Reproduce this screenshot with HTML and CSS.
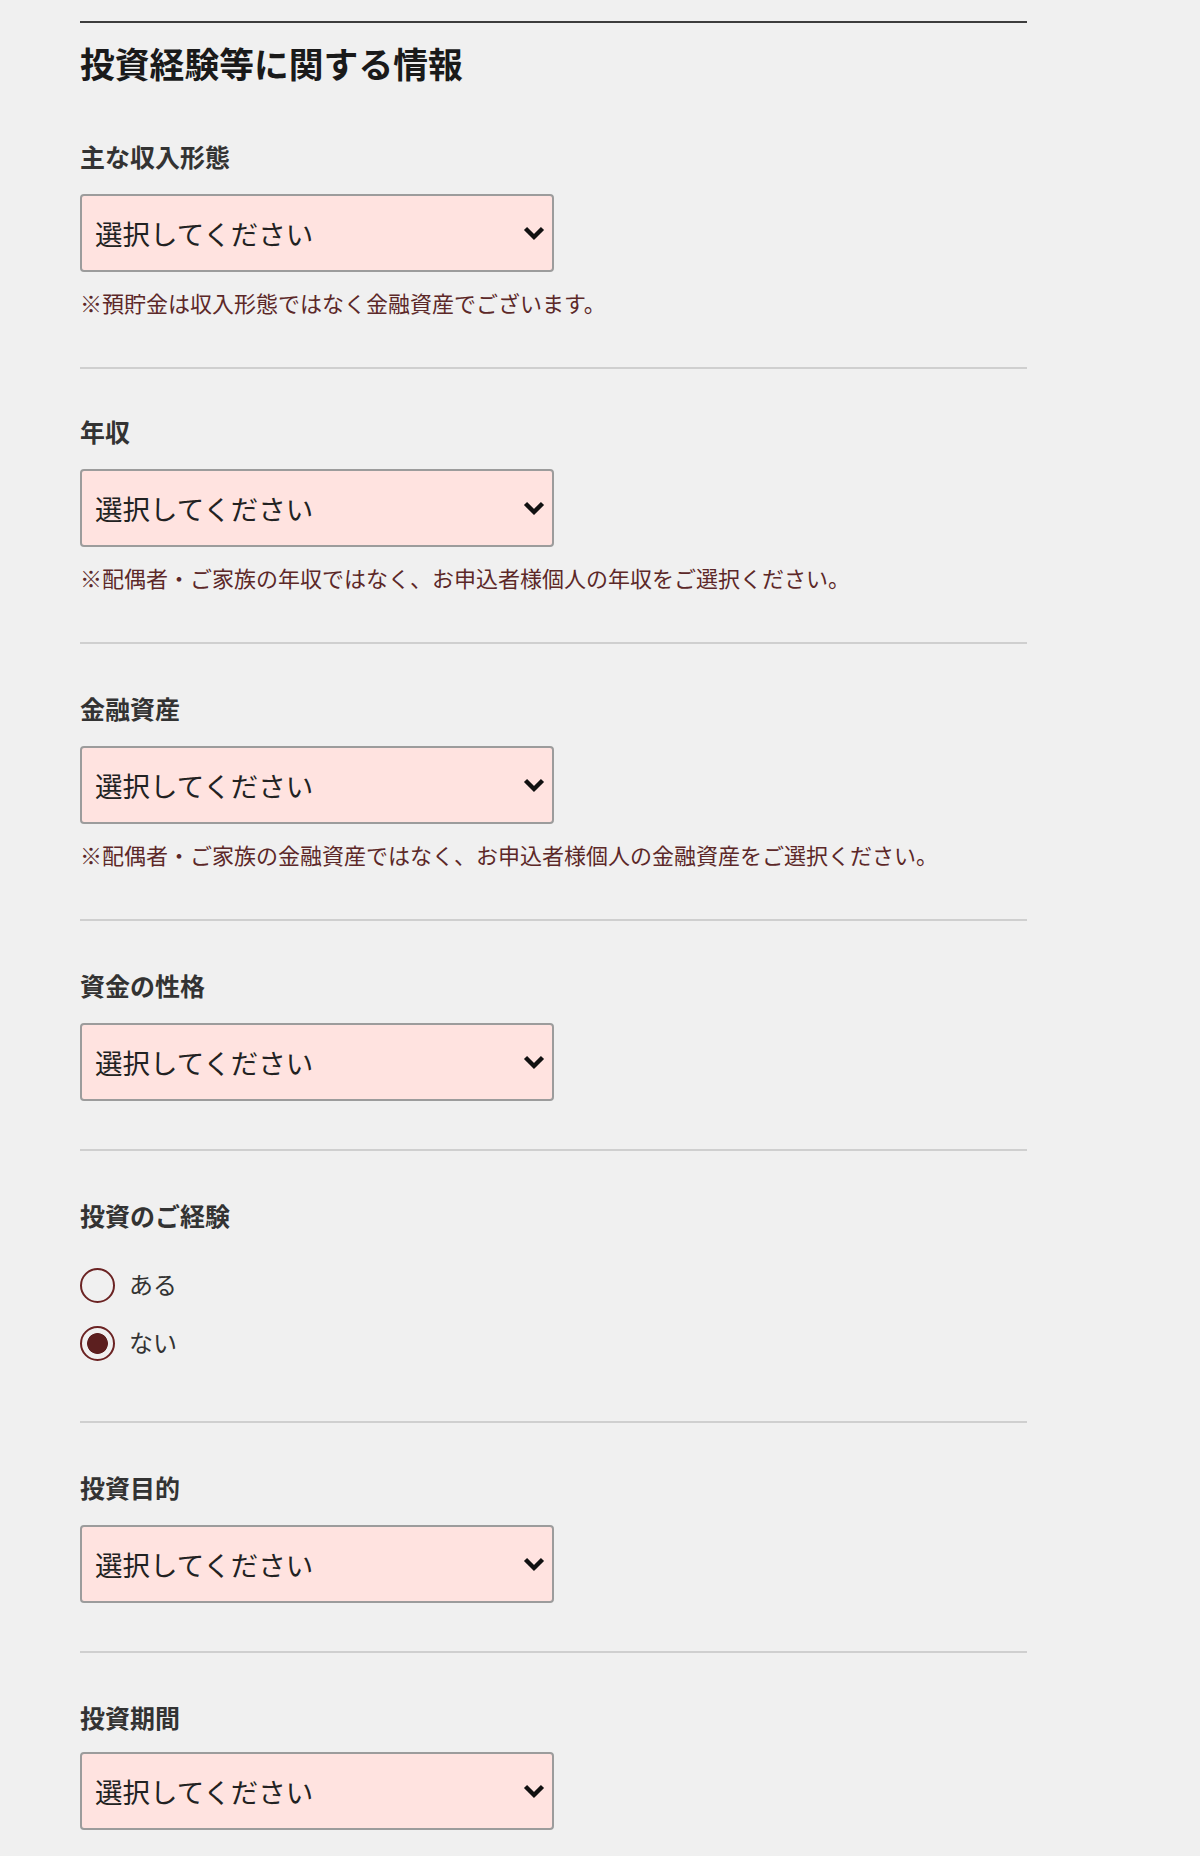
FILE: index.html
```html
<!DOCTYPE html>
<html lang="ja">
<head>
<meta charset="utf-8">
<title>投資経験等に関する情報</title>
<link rel="stylesheet" href="styles.css">
</head>
<body>
<section class="form">
  <h2 class="form__title">投資経験等に関する情報</h2>

  <div class="field">
    <div class="field__label">主な収入形態</div>
    <div class="select">
      <select class="select__control"><option>選択してください</option></select>
      <svg class="select__icon" viewBox="0 0 22 15" aria-hidden="true"><path d="M2.5 2.5 L11 11 L19.5 2.5" fill="none" stroke="#111" stroke-width="4.4" stroke-linejoin="miter" stroke-linecap="butt"/></svg>
    </div>
    <p class="field__note">※預貯金は収入形態ではなく金融資産でございます。</p>
  </div>

  <div class="field field--top-tight">
    <div class="field__label">年収</div>
    <div class="select">
      <select class="select__control"><option>選択してください</option></select>
      <svg class="select__icon" viewBox="0 0 22 15" aria-hidden="true"><path d="M2.5 2.5 L11 11 L19.5 2.5" fill="none" stroke="#111" stroke-width="4.4" stroke-linejoin="miter" stroke-linecap="butt"/></svg>
    </div>
    <p class="field__note">※配偶者・ご家族の年収ではなく、お申込者様個人の年収をご選択ください。</p>
  </div>

  <div class="field">
    <div class="field__label">金融資産</div>
    <div class="select">
      <select class="select__control"><option>選択してください</option></select>
      <svg class="select__icon" viewBox="0 0 22 15" aria-hidden="true"><path d="M2.5 2.5 L11 11 L19.5 2.5" fill="none" stroke="#111" stroke-width="4.4" stroke-linejoin="miter" stroke-linecap="butt"/></svg>
    </div>
    <p class="field__note">※配偶者・ご家族の金融資産ではなく、お申込者様個人の金融資産をご選択ください。</p>
  </div>

  <div class="field field--compact">
    <div class="field__label">資金の性格</div>
    <div class="select">
      <select class="select__control"><option>選択してください</option></select>
      <svg class="select__icon" viewBox="0 0 22 15" aria-hidden="true"><path d="M2.5 2.5 L11 11 L19.5 2.5" fill="none" stroke="#111" stroke-width="4.4" stroke-linejoin="miter" stroke-linecap="butt"/></svg>
    </div>
  </div>

  <div class="field">
    <div class="field__label">投資のご経験</div>
    <div class="radios">
      <label class="radio"><input class="radio__input" type="radio" name="exp"><span class="radio__text">ある</span></label>
      <label class="radio"><input class="radio__input" type="radio" name="exp" checked><span class="radio__text">ない</span></label>
    </div>
  </div>

  <div class="field field--compact">
    <div class="field__label">投資目的</div>
    <div class="select">
      <select class="select__control"><option>選択してください</option></select>
      <svg class="select__icon" viewBox="0 0 22 15" aria-hidden="true"><path d="M2.5 2.5 L11 11 L19.5 2.5" fill="none" stroke="#111" stroke-width="4.4" stroke-linejoin="miter" stroke-linecap="butt"/></svg>
    </div>
  </div>

  <div class="field field--compact">
    <div class="field__label">投資期間</div>
    <div class="select select--near">
      <select class="select__control"><option>選択してください</option></select>
      <svg class="select__icon" viewBox="0 0 22 15" aria-hidden="true"><path d="M2.5 2.5 L11 11 L19.5 2.5" fill="none" stroke="#111" stroke-width="4.4" stroke-linejoin="miter" stroke-linecap="butt"/></svg>
    </div>
  </div>
</section>
</body>
</html>
```

FILE: styles.css
```css
html, body {
  margin: 0;
  padding: 0;
}

body {
  background: #f0f0f0;
  font-family: "Noto Sans CJK JP", "Noto Sans", sans-serif;
  color: #333;
}

.form {
  width: 947px;
  margin: 21px 0 0 80px;
  border-top: 2px solid #3d3d3d;
}

.form__title {
  margin: 20px 0 9px;
  font-size: 34.8px;
  line-height: 40px;
  font-weight: 700;
  color: #1a1a1a;
}

.field {
  padding: 48px 0 50px;
  border-bottom: 2px solid #cfcfcf;
}

.field--top-tight {
  padding-top: 46px;
}

.field--compact {
  padding-bottom: 48px;
}

.field__label {
  font-size: 25px;
  line-height: 32px;
  font-weight: 700;
  color: #333;
}

.select {
  position: relative;
  width: 474px;
  margin-top: 22px;
}

.select--near {
  margin-top: 19px;
}

.select__control {
  -webkit-appearance: none;
  appearance: none;
  display: block;
  box-sizing: border-box;
  width: 100%;
  height: 78px;
  margin: 0;
  padding: 0 50px 0 13px;
  border: 2px solid #9c9c9c;
  border-radius: 4px;
  background: #ffe3e0;
  font-family: inherit;
  font-size: 27.5px;
  color: #222;
  outline: none;
}

.select__icon {
  position: absolute;
  right: 9px;
  top: 50%;
  width: 22px;
  height: 15px;
  margin-top: -7px;
  pointer-events: none;
}

.field__note {
  margin: 15px 0 0;
  font-size: 22px;
  line-height: 30px;
  color: #5c2828;
}

.radios {
  margin-top: 26px;
  display: flex;
  flex-direction: column;
  gap: 2px;
}

.radio {
  display: flex;
  align-items: center;
  gap: 14px;
  height: 56px;
  font-size: 24px;
  color: #333;
}

.radio__text {
  padding-bottom: 4px;
}

.radio__input {
  -webkit-appearance: none;
  appearance: none;
  box-sizing: border-box;
  width: 35px;
  height: 35px;
  margin: 0;
  border: 2px solid #6b2323;
  border-radius: 50%;
  background: transparent;
}

.radio__input:checked {
  background: radial-gradient(circle, #5c1f1f 0, #5c1f1f 10px, transparent 10.8px);
}
```
